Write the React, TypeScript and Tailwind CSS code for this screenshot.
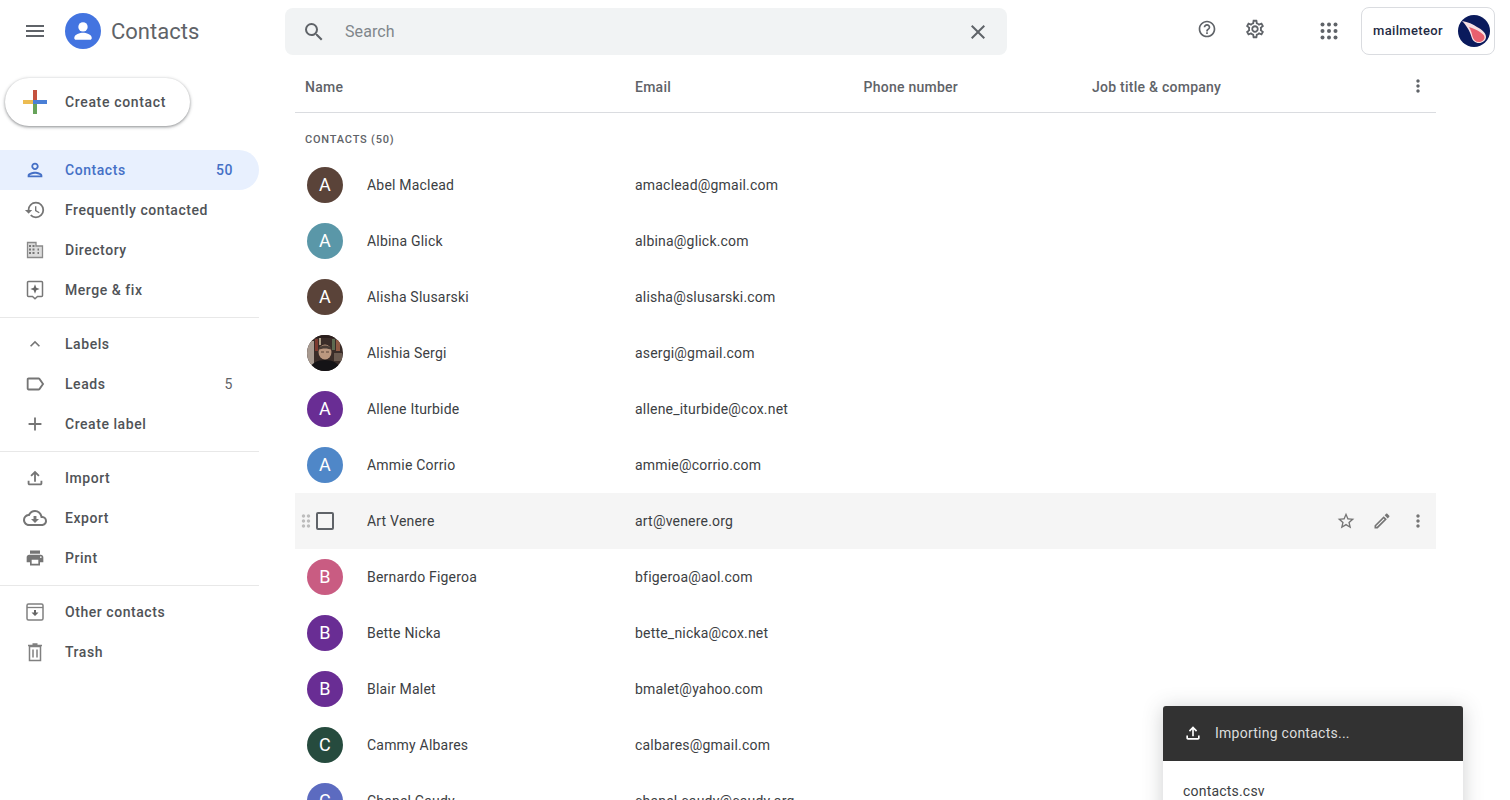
import type { ReactNode } from 'react';
import {
  MdMenu,
  MdSearch,
  MdClose,
  MdHelpOutline,
  MdOutlineSettings,
  MdMoreVert,
  MdOutlinePerson,
  MdHistory,
  MdExpandLess,
  MdOutlineLabel,
  MdAdd,
  MdOutlineFileUpload,
  MdOutlineCloudDownload,
  MdPrint,
  MdStarBorder,
  MdOutlineEdit,
  MdDragIndicator,
} from 'react-icons/md';

const contacts = [
  { name: 'Abel Maclead', email: 'amaclead@gmail.com', color: 'bg-[#5a4339]' },
  { name: 'Albina Glick', email: 'albina@glick.com', color: 'bg-[#5a97a8]' },
  { name: 'Alisha Slusarski', email: 'alisha@slusarski.com', color: 'bg-[#5a4339]' },
  { name: 'Alishia Sergi', email: 'asergi@gmail.com', photo: true },
  { name: 'Allene Iturbide', email: 'allene_iturbide@cox.net', color: 'bg-[#692d94]' },
  { name: 'Ammie Corrio', email: 'ammie@corrio.com', color: 'bg-[#4f87c8]' },
  { name: 'Art Venere', email: 'art@venere.org', hover: true },
  { name: 'Bernardo Figeroa', email: 'bfigeroa@aol.com', color: 'bg-[#c95c82]' },
  { name: 'Bette Nicka', email: 'bette_nicka@cox.net', color: 'bg-[#692d94]' },
  { name: 'Blair Malet', email: 'bmalet@yahoo.com', color: 'bg-[#692d94]' },
  { name: 'Cammy Albares', email: 'calbares@gmail.com', color: 'bg-[#264b3e]' },
  { name: 'Chanel Caudy', email: 'chanel.caudy@caudy.org', color: 'bg-[#5c6bc0]' },
];

const BuildingIcon = () => (
  <svg viewBox="0 0 18 18" className="h-[18px] w-[18px]" fill="none">
    <path d="M1.500 1.500h8.500v3.500h6.500v11.500h-15z" fill="#dcdcdc" stroke="#8a8a8a" strokeWidth="1.300" />
    <path d="M3 4h2v2H3zM6.500 4h2v2h-2zM3 7.500h2v2H3zM6.500 7.500h2v2h-2zM3 11h2v2H3zM6.500 11h2v2h-2zM11.500 7.500h1.500v2h-1.500zM11.500 11h1.500v2h-1.500z" fill="#777" />
  </svg>
);

const MergeIcon = () => (
  <svg viewBox="0 0 18 20" className="h-5 w-[18px]" fill="none">
    <path d="M2.500 1.500h13a1 1 0 0 1 1 1v13a1 1 0 0 1-1 1h-4l-2.500 2.200L6.500 16.500h-4a1 1 0 0 1-1-1v-13a1 1 0 0 1 1-1z" stroke="#777" strokeWidth="1.500" />
    <path d="M9 4.300l1.300 3.400 3.400 1.300-3.400 1.300L9 13.700l-1.300-3.400L4.300 9l3.400-1.300z" fill="#666" />
  </svg>
);

const OtherIcon = () => (
  <svg viewBox="0 0 18 18" className="h-[18px] w-[18px]" fill="none">
    <rect x="1" y="1" width="16" height="16" rx="1.500" stroke="#808080" strokeWidth="1.500" />
    <path d="M1 4.500h16" stroke="#808080" strokeWidth="1.300" />
    <path d="M8 7h2v2.500h2.500L9 13 5.500 9.500H8z" fill="#666" />
  </svg>
);

const TrashIcon = () => (
  <svg viewBox="0 0 18 20" className="h-5 w-[18px]" fill="none">
    <path d="M3.500 4.500h11v14h-11z" stroke="#808080" strokeWidth="1.500" />
    <path d="M2 3.500h14M6.500 2h5" stroke="#808080" strokeWidth="1.500" />
    <path d="M7 7.500v8M11 7.500v8" stroke="#808080" strokeWidth="1.500" />
  </svg>
);

const AppsIcon = () => (
  <svg viewBox="0 0 18 18" className="h-[18px] w-[18px]" fill="#5f6368">
    {[2.500, 9, 15.500].map((y) =>
      [2.500, 9, 15.500].map((x) => <circle key={`${x}-${y}`} cx={x} cy={y} r="2" />),
    )}
  </svg>
);

const NavItem = ({ icon, label, count, active }: { icon: ReactNode; label: string; count?: string; active?: boolean }) => (
  <div
    className={`flex h-10 w-[259px] items-center rounded-r-[20px] text-sm font-medium tracking-[0.55px] ${
      active ? 'bg-[#e8f0fe] text-[#4570c6]' : 'text-[#505357]'
    }`}
  >
    <span className={`flex w-[70px] shrink-0 justify-center ${active ? 'text-[#4570c6]' : 'text-[#757575]'}`}>{icon}</span>
    <span className="-ml-[5px] flex-1">{label}</span>
    {count && <span className={`pr-[26px] ${active ? '' : 'font-normal text-[#5f6368]'}`}>{count}</span>}
  </div>
);

const Divider = () => <div className="mb-1.5 mt-[7px] h-px w-[259px] bg-[#e8e8e8]" />;

// the one contact that has a real picture
const Photo = () => (
  <svg viewBox="0 0 36 36" className="h-9 w-9 rounded-full">
    <rect width="36" height="36" fill="#3a2c28" />
    <rect x="0" y="6" width="7" height="30" fill="#a89a90" />
    <rect x="7" y="0" width="29" height="3" fill="#2a1e1c" />
    <rect x="8" y="4" width="3" height="12" fill="#7d3a30" />
    <rect x="12" y="3" width="2" height="7" fill="#b0a088" />
    <rect x="25" y="4" width="3" height="11" fill="#5d6a50" />
    <rect x="29" y="5" width="4" height="11" fill="#8f5a44" />
    <rect x="27" y="18" width="8" height="8" fill="#6a5a50" />
    <ellipse cx="18" cy="17" rx="6.500" ry="7.500" fill="#bb977f" />
    <path d="M11.500 15c-.5-6 13.500-6 13 0-3-2-10-2-13 0z" fill="#4a3d36" />
    <path d="M14 17h3M19 17h3" stroke="#5a443a" strokeWidth="1" />
    <path d="M2 36c1-8 9-11 16-11s15 3 16 11z" fill="#141316" />
  </svg>
);

const Row = ({ c }: { c: (typeof contacts)[number] }) => (
  <div className={`flex h-14 items-center text-sm tracking-[0.2px] text-[#3c4043] ${c.hover ? 'bg-[#f5f5f5]' : ''}`}>
    <div className="flex w-[72px] shrink-0 items-center pl-3">
      {c.hover ? (
        <>
          <MdDragIndicator className="-ml-[11px] h-5 w-5 shrink-0 text-[#bdbdbd]" />
          <span className="h-[18px] w-[18px] shrink-0 rounded-[2px] border-2 border-[#5f6368]" />
        </>
      ) : c.photo ? (
        <Photo />
      ) : (
        <span className={`flex h-9 w-9 items-center justify-center rounded-full text-lg text-white ${c.color}`}>{c.name[0]}</span>
      )}
    </div>
    <div className="w-[268px] shrink-0">{c.name}</div>
    <div className="flex-1">{c.email}</div>
    {c.hover && (
      <div className="flex items-center gap-[16px] pr-[8px] text-[#757575]">
        <MdStarBorder className="h-5 w-5" />
        <MdOutlineEdit className="h-5 w-5" />
        <MdMoreVert className="h-5 w-5" />
      </div>
    )}
  </div>
);

export default function App() {
  return (
    <div className="relative flex h-screen flex-col overflow-hidden bg-white font-['Roboto',sans-serif]">
      <header className="flex h-16 shrink-0 items-start">
        <div className="flex w-[285px] shrink-0 items-center pt-[13px]">
          <MdMenu className="ml-[23px] h-6 w-6 text-[#5f6368]" />
          <span className="ml-[18px] flex h-9 w-9 items-center justify-center rounded-full bg-[#4374e0]">
            <svg viewBox="0 0 24 24" className="h-7 w-7" fill="#fff">
              <circle cx="12" cy="8.500" r="4" />
              <path d="M4.500 18c0-3 5-4.400 7.500-4.400s7.500 1.400 7.500 4.400c0 1-.6 1.500-1.500 1.500H6c-.9 0-1.500-.5-1.500-1.500z" />
            </svg>
          </span>
          <span className="ml-[10px] text-[22px] text-[#5f6368]">Contacts</span>
        </div>
        <div className="mt-2 flex h-[47px] w-[722px] shrink-0 items-center rounded-lg bg-[#f1f3f4] text-[#5f6368]">
          <MdSearch className="ml-[17px] h-6 w-6" />
          <span className="ml-[19px] flex-1 text-base tracking-[0.1px] text-[#80868b]">Search</span>
          <MdClose className="mr-[17px] h-6 w-6" />
        </div>
        <div className="flex flex-1 items-start pt-[7px]">
          <MdHelpOutline className="ml-[190px] mt-3 h-5 w-5 text-[#5f6368]" />
          <MdOutlineSettings className="ml-[27px] mt-[11px] h-[22px] w-[22px] text-[#5f6368]" />
          <span className="ml-[54px] mt-[15px] shrink-0">
            <AppsIcon />
          </span>
          <div className="ml-[23px] flex h-12 w-[134px] shrink-0 items-center rounded-lg border border-[#dadce0] pl-[11px]">
            <span className="flex-1 text-[13px] font-medium tracking-[0.35px] text-[#1f2a44]">mailmeteor</span>
            <svg viewBox="0 0 32 32" className="mr-1 h-8 w-8">
              <circle cx="16" cy="16" r="16" fill="#0a1a5c" />
              <path d="M4 6c6 1 11 3 15 6 5 2.500 9 6 9 10 0 3.500-3.500 6-7 6-4 0-6.500-2.500-7.500-6C12 16 8 10 4 6z" fill="#f6dfe2" />
              <path d="M11 12c4 1 8 3 11 5 3 2 4.500 3.500 4.500 5.500 0 2.500-3 4.500-5.500 4.500-3.500 0-5.500-2-6.500-5.500C14 19 13 15 11 12z" fill="#e8606e" />
            </svg>
          </div>
        </div>
      </header>
      <div className="flex min-h-0 flex-1">
        <aside className="w-[295px] shrink-0 pt-[14px]">
          <button className="ml-[5px] flex h-12 w-[185px] items-center rounded-full bg-white pl-[18px] text-sm font-medium tracking-[0.65px] text-[#505357] shadow-[0_1px_3px_1px_rgba(60,64,67,0.25),0_1px_2px_rgba(60,64,67,0.3)]">
            <svg viewBox="0 0 24 24" className="h-6 w-6">
              <path d="M10 0h4v10h-4z" fill="#c5523f" />
              <path d="M10 10h14v4H10z" fill="#4a7fd6" />
              <path d="M10 14h4v10h-4z" fill="#67a35a" />
              <path d="M0 10h10v4H0z" fill="#ecbc52" />
            </svg>
            <span className="ml-[18px]">Create contact</span>
          </button>
          <nav className="mt-6">
            <NavItem active icon={<MdOutlinePerson size={22} />} label="Contacts" count="50" />
            <NavItem icon={<MdHistory size={22} />} label="Frequently contacted" />
            <NavItem icon={<BuildingIcon />} label="Directory" />
            <NavItem icon={<MergeIcon />} label="Merge & fix" />
            <Divider />
            <NavItem icon={<MdExpandLess size={20} />} label="Labels" />
            <NavItem icon={<MdOutlineLabel size={22} />} label="Leads" count="5" />
            <NavItem icon={<MdAdd size={22} />} label="Create label" />
            <Divider />
            <NavItem icon={<MdOutlineFileUpload size={22} />} label="Import" />
            <NavItem icon={<MdOutlineCloudDownload size={24} />} label="Export" />
            <NavItem icon={<MdPrint size={20} />} label="Print" />
            <Divider />
            <NavItem icon={<OtherIcon />} label="Other contacts" />
            <NavItem icon={<TrashIcon />} label="Trash" />
          </nav>
        </aside>
        <main className="w-[1141px] shrink-0">
          <div className="flex h-[49px] items-center border-b border-[#dadce0] pb-[2px] text-sm font-medium tracking-[0.25px] text-[#5f6368]">
            <span className="ml-[10px] w-[330px]">Name</span>
            <span className="w-[228.500px]">Email</span>
            <span className="w-[228.500px]">Phone number</span>
            <span className="flex-1">Job title &amp; company</span>
            <MdMoreVert className="mb-[3px] mr-[8px] h-5 w-5" />
          </div>
          <div className="flex h-[44px] items-center pl-[10px] pt-[10px] text-[11px] font-medium tracking-[0.8px] text-[#5f6368]">CONTACTS (50)</div>
          {contacts.map((c) => (
            <Row key={c.email} c={c} />
          ))}
        </main>
      </div>
      <div className="absolute left-[1163px] top-[706px] w-[300px] overflow-hidden rounded-t-[3px] bg-white shadow-[0_2px_20px_rgba(60,64,67,0.25)]">
        <div className="flex h-[55px] items-center bg-[#323232] pb-[1px] pl-[20px] text-sm tracking-[0.25px] text-[#dcdcdc]">
          <MdOutlineFileUpload className="h-5 w-5 text-white" />
          <span className="ml-3">Importing contacts...</span>
        </div>
        <div className="flex h-[60px] items-start pl-5 pt-5 text-sm tracking-[0.2px] text-[#3c4043]">contacts.csv</div>
      </div>
    </div>
  );
}
